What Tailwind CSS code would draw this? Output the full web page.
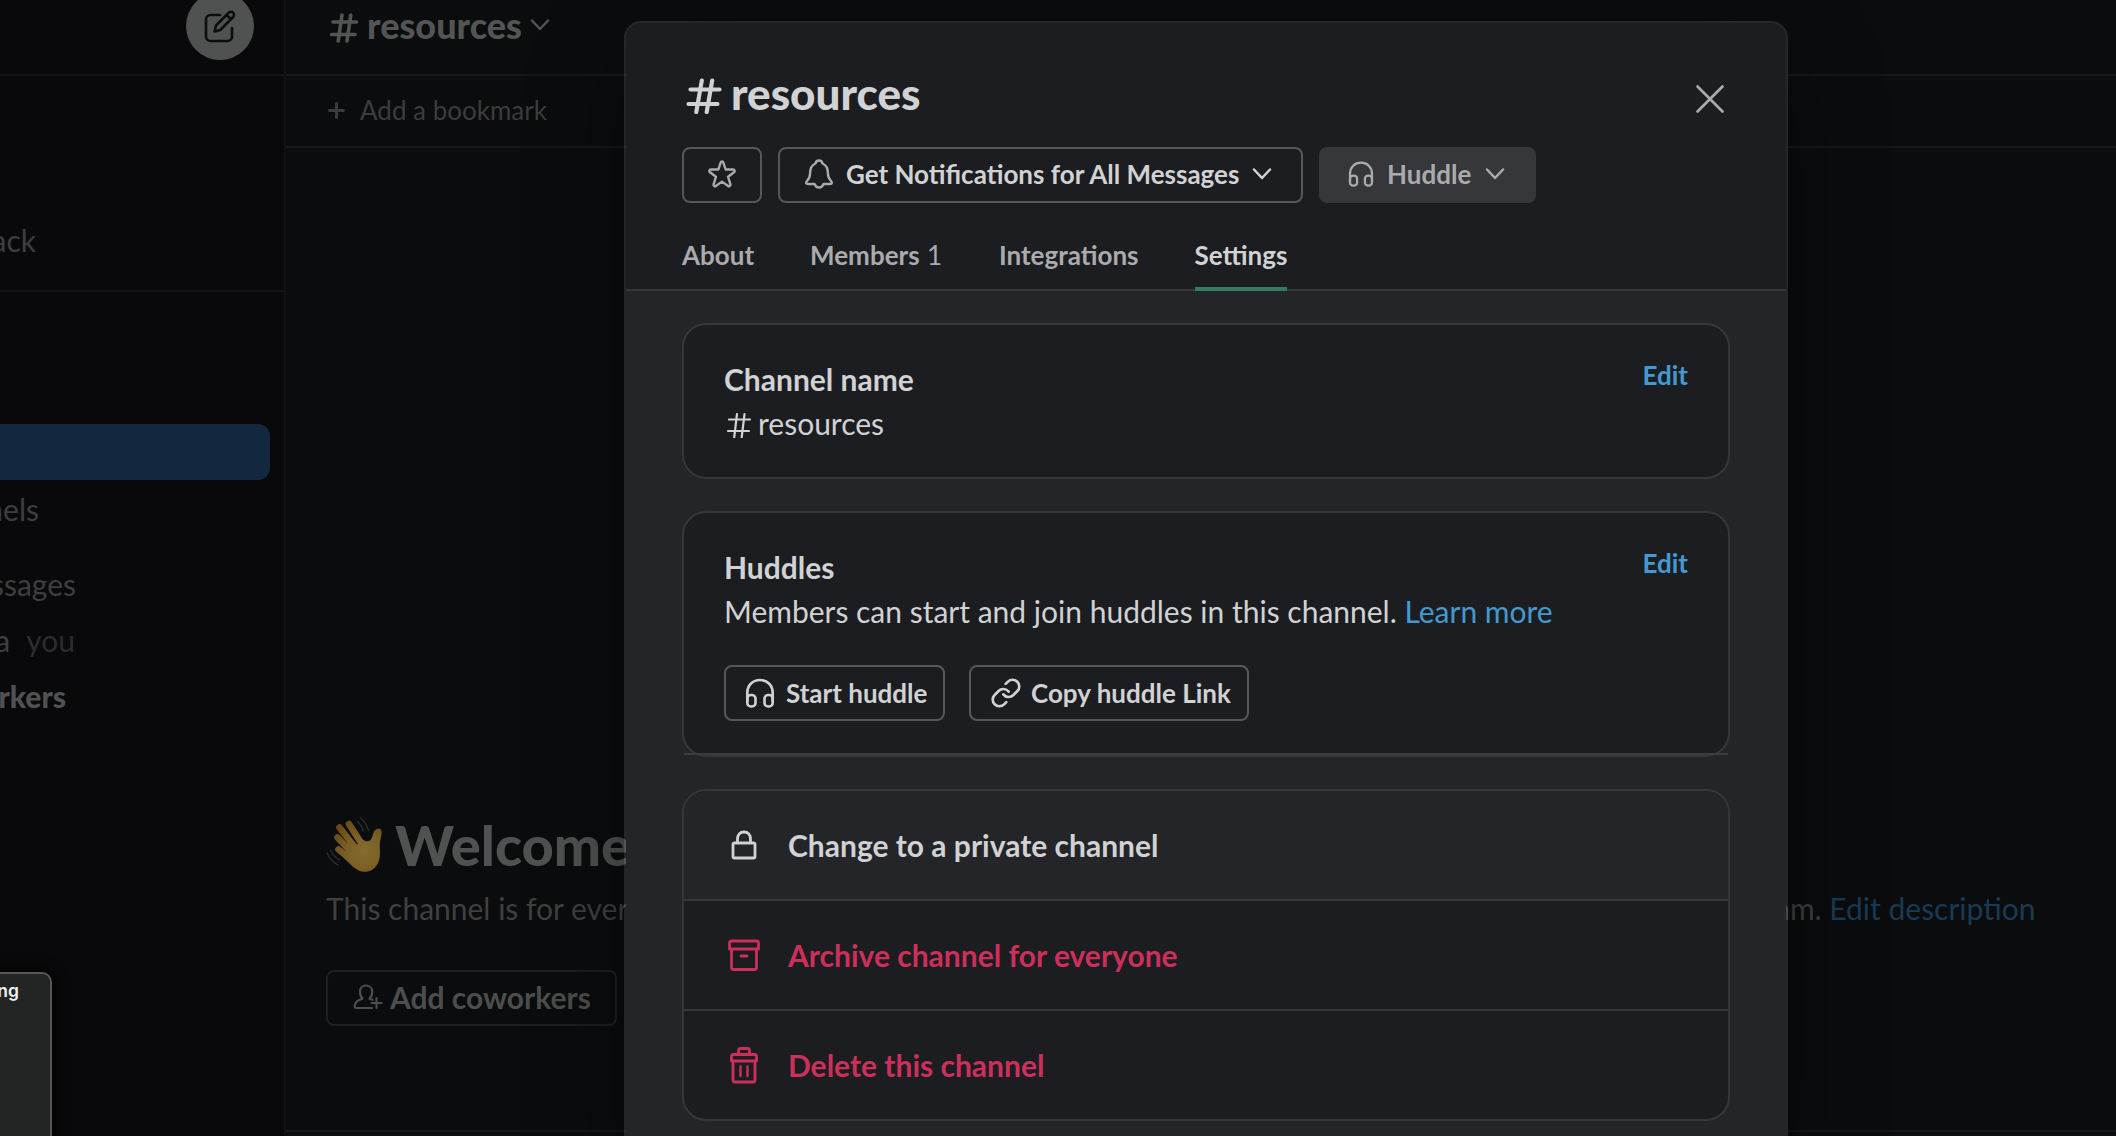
<!DOCTYPE html>
<html lang="en">
<head>
<meta charset="utf-8">
<title>resources</title>
<script src="https://cdn.jsdelivr.net/npm/@tailwindcss/browser@4"></script>
</head>
<body class="relative h-[1136px] w-[2116px] overflow-hidden bg-[#0a0c0e] font-['Lato',sans-serif] text-[30px] leading-[44px] text-[#d1d2d3]">

<!-- Shared icons -->
<svg class="hidden">
  <symbol id="chevron" viewBox="0 0 20 12"><path d="M2 1.500l8 8.500 8-8.500" fill="none" stroke="currentColor" stroke-width="2.500" stroke-linecap="round" stroke-linejoin="round"/></symbol>
  <symbol id="headphones" viewBox="0 0 30 30"><g fill="none" stroke="currentColor" stroke-width="2.600"><path d="M2.300 24V14.800C2.300 7 8 2 15 2s12.700 5 12.700 12.800V24"/><rect x="2.300" y="17" width="8.200" height="11.500" rx="3.600"/><rect x="19.500" y="17" width="8.200" height="11.500" rx="3.600"/></g></symbol>
</svg>

<div class="flex h-full">
  <!-- Sidebar -->
  <aside class="flex w-[286px] shrink-0 flex-col border-r-2 border-[#111214] bg-[#09090b] text-[#3d3e3f]">
    <div class="flex h-[76px] shrink-0 justify-end border-b-2 border-[#131416] pr-[30px]">
      <div class="-mt-2 flex size-[68px] items-center justify-center rounded-full bg-[#505251]">
        <svg class="size-[36px] text-[#0c0d0f]" viewBox="0 0 36 36" fill="none" stroke="currentColor" stroke-width="2.600" stroke-linecap="round" stroke-linejoin="round"><path d="M18 7H8.500A4.500 4.500 0 0 0 4 11.500v17A4.500 4.500 0 0 0 8.500 33h17a4.500 4.500 0 0 0 4.500-4.500V20"/><path d="M12.500 23.500l1.500-6L26.800 4.700a3 3 0 0 1 4.300 4.300L18.300 22z"/><path d="M25 7.500l3.800 3.600"/></svg>
      </div>
    </div>
    <div class="flex h-[216px] shrink-0 flex-col border-b-2 border-[#131416] pt-[142px]">
      <span class="flex h-[44px] w-[36px] justify-end whitespace-nowrap">ack</span>
    </div>
    <div class="mt-[132px] h-[56px] w-[270px] shrink-0 rounded-r-[12px] bg-[#13273e]"></div>
    <span class="mt-[7px] flex h-[44px] w-[39px] justify-end">nels</span>
    <span class="mt-[31px] flex h-[44px] w-[76px] justify-end">ssages</span>
    <span class="mt-[12px] flex h-[44px] w-[75px] justify-end gap-[16px]"><span class="text-[#3f4041]">a</span><span class="text-[#2b2c2e]">you</span></span>
    <span class="mt-[12px] flex h-[44px] w-[66px] justify-end font-black text-[#505252]">rkers</span>
  </aside>

  <!-- Channel view -->
  <main class="flex min-w-0 flex-1 flex-col">
    <header class="flex h-[76px] shrink-0 items-start border-b-2 border-[#151719] pl-[40px] text-[36px] font-black text-[#535554]">
      <svg class="mt-[10px] size-[36px]" viewBox="0 0 36 36" fill="none" stroke="currentColor" stroke-width="3.600" stroke-linecap="round"><path d="M7 12h23.500M5.500 24.500H29M16 5l-3.800 26M24.800 5L21 31"/></svg>
      <span class="ml-[5px] mt-[3px]">resources</span>
      <svg class="ml-[8px] mt-[19px] h-[12px] w-[20px]"><use href="#chevron"/></svg>
    </header>
    <div class="flex h-[72px] shrink-0 items-center border-b-2 border-[#151719] pb-[2px] pl-[42px] text-[26px] text-[#3b3c3d]">
      <svg class="size-[17px]" viewBox="0 0 16 16" stroke="currentColor" stroke-width="2.800" stroke-linecap="round"><path d="M8 1.500v13M1.500 8h13"/></svg>
      <span class="ml-[15px]">Add a bookmark</span>
    </div>
    <section class="flex flex-1 flex-col pl-[40px] pt-[661px]">
      <h2 class="flex h-[72px] items-center text-[56px] font-black leading-[72px] text-[#505251]">
        <svg class="h-[58px] w-[58px]" viewBox="0 -1 58 58">
          <defs><radialGradient id="skin" gradientUnits="userSpaceOnUse" cx="38" cy="34" r="34"><stop offset="0" stop-color="#846d2d"/><stop offset=".5" stop-color="#7c6026"/><stop offset="1" stop-color="#6b4a16"/></radialGradient></defs>
          <path d="M23 7l14 22M13.500 10.500L31 33M11.500 20.500L28 38M12.500 32.500L27 44" fill="none" stroke="url(#skin)" stroke-width="6.600" stroke-linecap="round"/>
          <path d="M26 32L37 22.500C39 24.500 42 25 44.500 23 47.500 20.500 46.500 11.500 52.500 11.500 57.500 11.500 55.500 18 54 25 53 31 55.500 37 52.500 45 49.500 53 42 56 35.500 54.500 29 53 22.500 45.500 16 39z" fill="url(#skin)"/>
          <path d="M34.500 1c4 3 6.500 7 8 12.500M31.500 4.500c3 3 5 6 6 9.500M1 36c2.500 5.500 6 9.500 11 12M4.500 33.500c2.500 4.500 4.500 7 9 9.500" fill="none" stroke="#2a2b2c" stroke-width="1.500" stroke-linecap="round"/>
        </svg>
        <span class="ml-[11px]">Welcome</span>
      </h2>
      <p class="mt-[5px] flex h-[44px] whitespace-pre text-[#3f4040]"><span class="w-[1449px]">This channel is for every</span><span>am. </span><span class="text-[#1a3a53]">Edit description</span></p>
      <div class="mt-[40px] flex h-[56px] w-[291px] items-center rounded-[8px] border-2 border-[#1d1f21] pb-[2px] pl-[25px] font-bold text-[#4c4e4e]">
        <svg class="mb-[1px] h-[28px] w-[30px]" viewBox="0 0 30 28" fill="none" stroke="currentColor" stroke-width="2.200" stroke-linecap="round" stroke-linejoin="round"><path d="M19 25H3.500C1.500 25 1.300 23 2 21.500 3 18.500 6 16.500 9.500 15.800 7.500 14 7 11.500 7 8.500 7 5 9.500 2.500 13 2.500s6.200 2.500 6.200 6c0 3-.8 5.500-2.700 7.300 1.300.2 2 .5 3 1M23.500 15v10M18.500 20h10"/></svg>
        <span class="ml-[7px]">Add coworkers</span>
      </div>
    </section>
    <footer class="h-[6px] shrink-0 border-t-2 border-[#151719]"></footer>
  </main>
</div>

<!-- Tooltip in the corner -->
<div class="absolute -left-[20px] top-[972px] flex h-[200px] w-[72px] justify-end rounded-[10px] border-2 border-[#565857] bg-[#232524] pr-[31px] pt-[5px] font-['Inter',sans-serif] text-[17.500px] font-semibold leading-[24px] text-[#f0f0f0] shadow-[0_0_16px_#000000]">ng</div>

<!-- Channel details dialog -->
<div class="absolute left-[626px] top-[23px] flex h-[1130px] w-[1160px] flex-col overflow-hidden rounded-t-[15px] bg-[#242529] shadow-[0_0_0_2px_rgba(232,232,232,0.13),0_36px_96px_rgba(0,0,0,0.45)]">
  <div class="flex h-[268px] shrink-0 flex-col border-b-2 border-[#35373b] bg-[#1c1d21] px-[56px] pt-[41px]">
    <div class="flex h-[56px] shrink-0 items-center">
      <svg class="size-[44px]" viewBox="0 0 44 44" fill="none" stroke="currentColor" stroke-width="4.200" stroke-linecap="round"><path d="M8.500 19.500H37.500M6.500 34H35.500M19.800 10.500L14.300 42M30.200 10.500L24.700 42"/></svg>
      <h1 class="ml-[5px] mt-[2px] text-[44px] font-black leading-[56px]">resources</h1>
      <svg class="ml-auto mr-[5px] mt-[14px] size-[30px] text-[#ababad]" viewBox="0 0 30 30" stroke="currentColor" stroke-width="2.700" stroke-linecap="round"><path d="M2.500 2.500l25 25M27.500 2.500l-25 25"/></svg>
    </div>
    <div class="mt-[27px] flex h-[56px] shrink-0 gap-[16px] text-[26px] font-bold">
      <button class="flex w-[80px] items-center justify-center rounded-[8px] border-2 border-[#565759] pb-[2px] text-[#ababad]">
        <svg class="size-[30px]" viewBox="0 0 30 30" fill="none" stroke="currentColor" stroke-width="2.400" stroke-linejoin="round"><path d="M13.700 3.400c.4-1.400 2.200-1.400 2.600 0l2.300 7.100h7.600c1.500 0 2 1.800.8 2.700l-5.900 4.600 2.300 7.600c.4 1.400-1.200 2.500-2.300 1.600L15 22.600 8.900 27c-1.100.9-2.700-.2-2.300-1.600l2.300-7.600L3 13.200c-1.200-.9-.7-2.700.8-2.700h7.600z"/></svg>
      </button>
      <button class="flex w-[525px] items-center rounded-[8px] border-2 border-[#565759] pb-[2px] pl-[24px]">
        <svg class="size-[30px] text-[#ababad]" viewBox="0 0 30 30" fill="none" stroke="currentColor" stroke-width="2.400" stroke-linejoin="round"><path d="M11.500 4.500c.7-4 6.300-4 7 0 4.500 1.800 5.500 6 5.500 10.500 0 3 1 5 3 7 1.500 1.500 1 3-1 3h-6.500c-.8 2-2.500 3.500-4.500 3.500s-3.700-1.500-4.500-3.500H4c-2 0-2.500-1.500-1-3 2-2 3-4 3-7 0-4.500 1-8.700 5.500-10.500z"/></svg>
        <span class="ml-[12px]">Get Notifications for All Messages</span>
        <svg class="ml-[13px] h-[12px] w-[20px]"><use href="#chevron"/></svg>
      </button>
      <button class="flex w-[217px] items-center rounded-[8px] bg-[#35373b] pb-[2px] pl-[29px] text-[#ababad]">
        <svg class="size-[26px]"><use href="#headphones"/></svg>
        <span class="ml-[13px]">Huddle</span>
        <svg class="ml-[14px] h-[12px] w-[20px]"><use href="#chevron"/></svg>
      </button>
    </div>
    <nav class="mt-[29px] flex h-[59px] shrink-0 gap-[56px] text-[26px] font-bold text-[#ababad]">
      <span class="pt-px">About</span>
      <span class="pt-px">Members <span class="ml-px mr-px font-normal">1</span></span>
      <span class="pt-px">Integrations</span>
      <span class="h-[59px] border-b-4 border-[#347c5e] pt-px text-[#d1d2d3]">Settings</span>
    </nav>
  </div>

  <div class="flex flex-col gap-[32px] px-[56px] pt-[32px]">
    <section class="flex h-[156px] justify-between rounded-[24px] border-2 border-[#35373b] bg-[#1c1d21] px-[40px] pt-[32px]">
      <div>
        <h2 class="font-bold">Channel name</h2>
        <div class="flex items-center">
          <svg class="size-[30px]" viewBox="0 0 30 30" fill="none" stroke="currentColor" stroke-width="2.200" stroke-linecap="round"><path d="M5 11.500h21M4 23h21M13 6l-2.800 23.500M20.500 6L17.700 29.500"/></svg>
          <span class="ml-[4px]">resources</span>
        </div>
      </div>
      <a class="-mt-[4px] text-[26px] font-bold text-[#4499d0]">Edit</a>
    </section>

    <section class="flex h-[246px] flex-col rounded-[24px] border-2 border-[#35373b] bg-[#1c1d21]">
      <div class="flex h-[242px] flex-col border-b-2 border-[#3a3c40] px-[40px] pt-[32px]">
        <div class="flex h-[44px] justify-between">
          <h2 class="font-bold">Huddles</h2>
          <a class="-mt-[4px] text-[26px] font-bold text-[#4499d0]">Edit</a>
        </div>
        <p>Members can start and join huddles in this channel. <a class="text-[#4499d0]">Learn more</a></p>
        <div class="mt-[32px] flex h-[56px] gap-[24px] text-[26px] font-bold">
          <button class="flex w-[221px] items-center rounded-[8px] border-2 border-[#565759] pl-[19px]">
            <svg class="size-[30px]"><use href="#headphones"/></svg>
            <span class="ml-[11px]">Start huddle</span>
          </button>
          <button class="flex w-[280px] items-center rounded-[8px] border-2 border-[#565759] pl-[19px]">
            <svg class="size-[32px]" viewBox="0 0 24 24" fill="none" stroke="currentColor" stroke-width="2" stroke-linecap="round" stroke-linejoin="round"><path d="M10 13a5 5 0 0 0 7.540.540l3-3a5 5 0 0 0-7.070-7.070l-1.720 1.710"/><path d="M14 11a5 5 0 0 0-7.540-.540l-3 3a5 5 0 0 0 7.070 7.070l1.710-1.710"/></svg>
            <span class="ml-[9px]">Copy huddle Link</span>
          </button>
        </div>
      </div>
    </section>

    <section class="flex h-[332px] flex-col overflow-hidden rounded-[24px] border-2 border-[#35373b] bg-[#1c1d21] font-bold">
      <div class="flex h-[110px] items-center gap-[24px] border-b-2 border-[#35373b] bg-[#242529] pl-[40px]">
        <svg class="size-[40px]" viewBox="0 0 40 40" fill="none" stroke="currentColor" stroke-width="2.800" stroke-linejoin="round"><rect x="9" y="18" width="22" height="15" rx="1.500"/><path d="M13.500 18v-4c0-4 2.500-7 6.500-7s6.500 3 6.500 7v4"/></svg>
        <span>Change to a private channel</span>
      </div>
      <div class="flex h-[110px] items-center gap-[24px] border-b-2 border-[#35373b] pl-[40px] text-[#cd2f5b]">
        <svg class="size-[40px]" viewBox="0 0 40 40" fill="none" stroke="currentColor" stroke-width="2.800" stroke-linejoin="round" stroke-linecap="round"><path d="M5.500 14V8a2 2 0 0 1 2-2h25a2 2 0 0 1 2 2v6zM7.500 14v18.500a2 2 0 0 0 2 2h21a2 2 0 0 0 2-2V14M17 21h6"/></svg>
        <span>Archive channel for everyone</span>
      </div>
      <div class="flex h-[108px] items-center gap-[24px] pl-[40px] text-[#cd2f5b]">
        <svg class="size-[40px]" viewBox="0 0 40 40" fill="none" stroke="currentColor" stroke-width="2.800" stroke-linejoin="round"><path d="M7.500 16v-4.500a2 2 0 0 1 2-2h21a2 2 0 0 1 2 2V16zM9 16v19a2 2 0 0 0 2 2h18a2 2 0 0 0 2-2V16M14.500 9.500V5.500a2 2 0 0 1 2-2h7a2 2 0 0 1 2 2v4"/><path d="M16.500 21.500v9.500M23.500 21.500v9.500" stroke-width="2.400" stroke-linecap="round"/></svg>
        <span>Delete this channel</span>
      </div>
    </section>
  </div>
</div>
</body>
</html>
